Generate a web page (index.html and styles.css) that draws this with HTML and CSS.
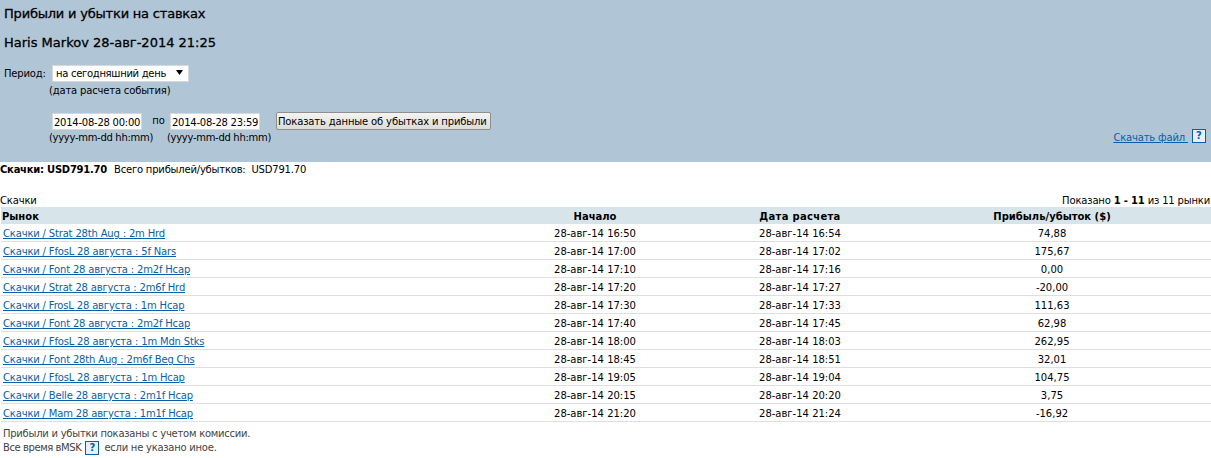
FILE: index.html
```html
<!DOCTYPE html>
<html lang="ru">
<head>
<meta charset="utf-8">
<title>Прибыли и убытки на ставках</title>
<link rel="stylesheet" href="styles.css">
</head>
<body>
<header class="panel">
  <h1 class="title">Прибыли и убытки на ставках</h1>
  <h2 class="user">Haris Markov 28-авг-2014 21:25</h2>
  <div class="period-row">
    <span class="period-label">Период:</span>
    <div class="select"><span>на сегодняшний день</span><svg class="arrow" width="7" height="5" viewBox="0 0 7 5"><path d="M0 0h7L3.500 5z" fill="#000"/></svg></div>
  </div>
  <div class="hint hint-event">(дата расчета события)</div>
  <div class="date-row">
    <div class="input">2014-08-28 00:00</div>
    <span class="to">по</span>
    <div class="input">2014-08-28 23:59</div>
    <button class="show" type="button">Показать данные об убытках и прибыли</button>
  </div>
  <div class="format-row">
    <span class="format">(yyyy-mm-dd hh:mm)</span>
    <span class="format">(yyyy-mm-dd hh:mm)</span>
  </div>
  <div class="download"><a href="#">Скачать файл&nbsp;</a><span class="help">?</span></div>
</header>
<div class="summary"><b>Скачки: USD791.70</b><span class="total">Всего прибылей/убытков:&nbsp; USD791.70</span></div>
<div class="caption-row"><span>Скачки</span><span>Показано <b>1 - 11</b> из 11 рынки</span></div>
<table class="markets">
  <colgroup><col class="c1"><col class="c2"><col class="c3"><col class="c4"></colgroup>
  <thead><tr><th class="left">Рынок</th><th>Начало</th><th class="wide">Дата расчета</th><th>Прибыль/убыток ($)</th></tr></thead>
  <tbody>
    <tr><td class="left"><a href="#">Скачки / Strat 28th Aug : 2m Hrd</a></td><td>28-авг-14 16:50</td><td>28-авг-14 16:54</td><td>74,88</td></tr>
    <tr><td class="left"><a href="#">Скачки / FfosL 28 августа : 5f Nars</a></td><td>28-авг-14 17:00</td><td>28-авг-14 17:02</td><td>175,67</td></tr>
    <tr><td class="left"><a href="#">Скачки / Font 28 августа : 2m2f Hcap</a></td><td>28-авг-14 17:10</td><td>28-авг-14 17:16</td><td>0,00</td></tr>
    <tr><td class="left"><a href="#">Скачки / Strat 28 августа : 2m6f Hrd</a></td><td>28-авг-14 17:20</td><td>28-авг-14 17:27</td><td>-20,00</td></tr>
    <tr><td class="left"><a href="#">Скачки / FrosL 28 августа : 1m Hcap</a></td><td>28-авг-14 17:30</td><td>28-авг-14 17:33</td><td>111,63</td></tr>
    <tr><td class="left"><a href="#">Скачки / Font 28 августа : 2m2f Hcap</a></td><td>28-авг-14 17:40</td><td>28-авг-14 17:45</td><td>62,98</td></tr>
    <tr><td class="left"><a href="#">Скачки / FfosL 28 августа : 1m Mdn Stks</a></td><td>28-авг-14 18:00</td><td>28-авг-14 18:03</td><td>262,95</td></tr>
    <tr><td class="left"><a href="#">Скачки / Font 28th Aug : 2m6f Beg Chs</a></td><td>28-авг-14 18:45</td><td>28-авг-14 18:51</td><td>32,01</td></tr>
    <tr><td class="left"><a href="#">Скачки / FfosL 28 августа : 1m Hcap</a></td><td>28-авг-14 19:05</td><td>28-авг-14 19:04</td><td>104,75</td></tr>
    <tr><td class="left"><a href="#">Скачки / Belle 28 августа : 2m1f Hcap</a></td><td>28-авг-14 20:15</td><td>28-авг-14 20:20</td><td>3,75</td></tr>
    <tr><td class="left"><a href="#">Скачки / Mam 28 августа : 1m1f Hcap</a></td><td>28-авг-14 21:20</td><td>28-авг-14 21:24</td><td>-16,92</td></tr>
  </tbody>
</table>
<footer class="notes">
  <div class="note">Прибыли и убытки показаны с учетом комиссии.</div>
  <div class="tz"><span class="tz-lead">Все время вMSK</span><span class="help">?</span>если не указано иное.</div>
</footer>
</body>
</html>
```
FILE: styles.css
```css
* { box-sizing: border-box; }
html, body { margin: 0; padding: 0; }
body {
  width: 1211px;
  height: 458px;
  overflow: hidden;
  background: #fff;
  color: #000;
  font-family: "DejaVu Sans", Verdana, sans-serif;
  font-size: 10px;
  line-height: 12px;
  letter-spacing: -0.17px;
}
a { color: #0b5ea8; text-decoration: underline; }
.panel {
  position: relative;
  height: 162px;
  background: #b0c6d7;
  padding: 6px 0 0 4px;
}
.title, .user {
  margin: 0;
  font-size: 13px;
  line-height: 15px;
  font-weight: normal;
  letter-spacing: 0;
  -webkit-text-stroke: 0.3px #000;
}
.title { letter-spacing: -0.2px; }
.user { margin-top: 14px; }
.period-row { display: flex; align-items: center; margin-top: 15px; height: 17px; }
.period-label { width: 48px; }
.select {
  width: 137px;
  height: 17px;
  background: #fff;
  border: 1px solid #d8d8d8;
  display: flex;
  align-items: center;
  justify-content: space-between;
  padding: 0 5px 0 3px;
  white-space: nowrap;
  letter-spacing: -0.3px;
}
.arrow { margin-bottom: 3px; }
.hint { margin-left: 45px; }
.hint-event { margin-top: 3px; }
.date-row { display: flex; align-items: center; margin: 15px 0 0 48px; height: 18px; }
.input {
  width: 90px;
  height: 17px;
  background: #fff;
  border: 1px solid #d8d8d8;
  padding: 3px 0 0 1px;
  line-height: 12px;
  white-space: nowrap;
  overflow: hidden;
  letter-spacing: -0.25px;
}
.to { width: 28px; padding-left: 5px; text-align: center; }
.show {
  width: 215px;
  height: 18px;
  margin-left: 16px;
  padding: 1px 0 0 1px;
  font: inherit;
  letter-spacing: -0.15px;
  text-align: left;
  color: #000;
  background: linear-gradient(#f4f4f2, #dcdcd8);
  border: 1px solid #8f8f8f;
  border-radius: 2px;
  white-space: nowrap;
}
.format-row { display: flex; margin: 2px 0 0 45px; letter-spacing: -0.3px; }
.format { width: 118px; }
.download { position: absolute; right: 5px; top: 129px; display: flex; align-items: flex-start; }
.download a { margin: 3px 4px 0 0; }
.help {
  display: inline-block;
  width: 14px;
  height: 14px;
  border: 1px solid #0b5ea8;
  background: #e9f0f5;
  color: #0b5ea8;
  font-weight: bold;
  font-size: 10px;
  line-height: 12px;
  letter-spacing: 0;
  text-align: center;
}
.summary { padding-top: 2px; height: 26px; display: flex; letter-spacing: -0.2px; }
.summary b { margin-right: 7px; letter-spacing: -0.25px; }
.total { letter-spacing: -0.2px; }
.caption-row { display: flex; justify-content: space-between; margin-top: 7px; height: 12px; padding-right: 1px; line-height: 12px; }
.markets {
  border-collapse: separate;
  border-spacing: 0;
  table-layout: fixed;
  width: 1210px;
  margin-left: 1px;
}
.c2 { width: 224px; }
.c3 { width: 186px; }
.c4 { width: 318px; }
.markets th {
  height: 17px;
  padding: 4px 0 1px;
  background: #d7e5ea;
  font-size: 10px;
  letter-spacing: 0;
  text-align: center;
}
.markets th.wide { letter-spacing: 0.3px; }
.markets td {
  height: 18px;
  padding: 4px 0 1px;
  border-bottom: 1px solid #dfdfdf;
  text-align: center;
  letter-spacing: 0;
}
.markets .left { text-align: left; padding-left: 2px; }
.markets th.left { padding-left: 1px; }
.markets td.left { letter-spacing: -0.17px; }
.notes { padding: 6px 0 0 3px; color: #444; letter-spacing: -0.25px; }
.note { height: 13px; }
.tz { display: flex; align-items: center; height: 14px; }
.tz-lead { letter-spacing: -0.42px; }
.tz .help { margin: 0 5px 0 4px; }
```
